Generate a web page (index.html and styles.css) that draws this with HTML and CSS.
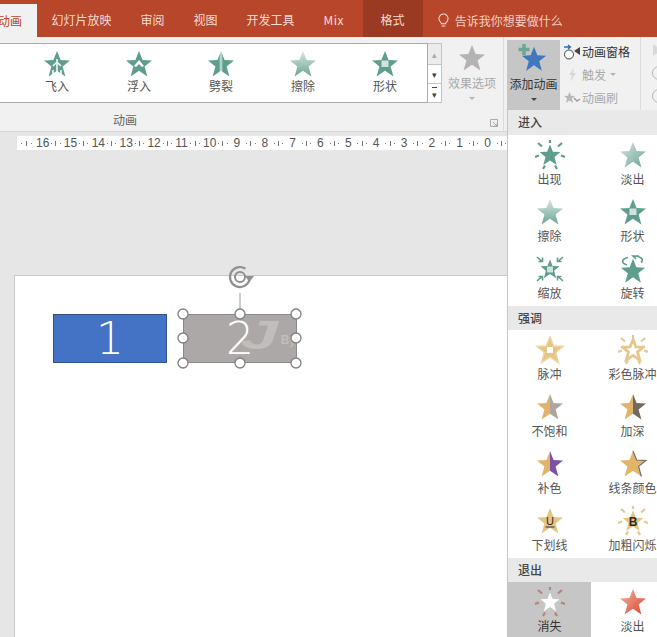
FILE: index.html
```html
<!DOCTYPE html>
<html lang="zh">
<head>
<meta charset="utf-8">
<title>动画</title>
<link rel="stylesheet" href="styles.css">
</head>
<body>
<svg class="defs" aria-hidden="true">
  <defs>
    <symbol id="s" viewBox="0 0 30 30"><polygon points="15,2 18.6,11 28,11.4 20.6,17.4 23.4,27.5 15,21.8 6.6,27.5 9.4,17.4 2,11.4 11.4,11"/></symbol>
    <symbol id="rays" viewBox="0 0 30 30"><path d="M15 0v3M3 3l4 3.500M27 3l-4 3.500M0 17l4-1.500M30 17l-4-1.500M8 29l2-3.500M22 29l-2-3.500" fill="none" stroke="currentColor" stroke-width="2.200"/></symbol>
    <linearGradient id="gFade" x1="0" y1="0" x2="1" y2="1"><stop offset="0" stop-color="#d5e5e0"/><stop offset="1" stop-color="#6fa596"/></linearGradient>
    <linearGradient id="gWipe" x1="0" y1="0" x2="0" y2="1"><stop offset="0" stop-color="#d8e7e3"/><stop offset="1" stop-color="#6ea596"/></linearGradient>
    <linearGradient id="gSplit" x1="0" y1="0" x2="1" y2="0"><stop offset="0" stop-color="#5f9e8e"/><stop offset=".42" stop-color="#5f9e8e"/><stop offset=".5" stop-color="#cfe2dc"/><stop offset=".58" stop-color="#5f9e8e"/><stop offset="1" stop-color="#5f9e8e"/></linearGradient>
    <linearGradient id="gRed" x1="0" y1="0" x2="1" y2="1"><stop offset="0" stop-color="#f3b6a6"/><stop offset="1" stop-color="#d8432a"/></linearGradient>
    <linearGradient id="gDesat" x1="0" y1="0" x2="1" y2="0"><stop offset=".5" stop-color="#e0b46a"/><stop offset=".5" stop-color="#aea69c"/></linearGradient>
    <linearGradient id="gDark" x1="0" y1="0" x2="1" y2="0"><stop offset=".5" stop-color="#e0b46a"/><stop offset=".5" stop-color="#75695c"/></linearGradient>
    <linearGradient id="gPurple" x1="0" y1="0" x2="1" y2="0"><stop offset=".5" stop-color="#e0b46a"/><stop offset=".5" stop-color="#7c52a6"/></linearGradient>
  </defs>
</svg>

<div class="window">
  <nav class="tabs">
    <span class="tab tab-active">动画</span>
    <span class="tab">幻灯片放映</span>
    <span class="tab">审阅</span>
    <span class="tab">视图</span>
    <span class="tab">开发工具</span>
    <span class="tab tab-mix">Mix</span>
    <span class="tab tab-format">格式</span>
    <span class="tell">
      <svg class="bulb" viewBox="0 0 12 16"><path d="M3.500 10.500C2 9.300 1 8 1 6a5 5 0 0 1 10 0c0 2-1 3.300-2.500 4.500v1h-5zM4 14h4" fill="none" stroke="currentColor" stroke-width="1.100"/></svg>
      告诉我你想要做什么
    </span>
  </nav>

  <section class="ribbon">
    <div class="anim-group">
      <div class="anim-top">
        <div class="gallery">
          <div class="gal-item">
            <svg class="ico" viewBox="0 0 30 30"><use href="#s" class="green"/><path d="M15 10v14M11 17l4-4 4 4M11 21v4M19 21v4" fill="none" stroke="#fff" stroke-width="1.500"/></svg>
            <span class="gal-label">飞入</span>
          </div>
          <div class="gal-item">
            <svg class="ico" viewBox="0 0 30 30"><use href="#s" class="green"/><path d="M15 11l-5 6 2 1 3-3 3 3 2-1z" fill="#fff"/></svg>
            <span class="gal-label">浮入</span>
          </div>
          <div class="gal-item">
            <svg class="ico" viewBox="0 0 30 30"><use href="#s" fill="url(#gSplit)"/></svg>
            <span class="gal-label">劈裂</span>
          </div>
          <div class="gal-item">
            <svg class="ico" viewBox="0 0 30 30"><use href="#s" fill="url(#gWipe)"/></svg>
            <span class="gal-label">擦除</span>
          </div>
          <div class="gal-item">
            <svg class="ico" viewBox="0 0 30 30"><use href="#s" class="green"/><rect x="11.500" y="11.500" width="7" height="6.500" fill="#cfe2dc"/></svg>
            <span class="gal-label">形状</span>
          </div>
        </div>
        <div class="gal-scroll">
          <span class="sb sb-up">▴</span>
          <span class="sb">▾</span>
          <span class="sb sb-more">▾</span>
        </div>
        <div class="effect">
          <svg class="ico" viewBox="0 0 30 30"><use href="#s" class="gray"/></svg>
          <span class="effect-label">效果选项</span>
          <span class="caret caret-dim"></span>
        </div>
      </div>
      <div class="group-label">
        <span class="group-name">动画</span>
        <svg class="launcher" viewBox="0 0 8 8"><path d="M.5.5h7v7h-7zM3 3l4 4M4.500 7H7V4.500" fill="none" stroke="#999" stroke-width=".8"/></svg>
      </div>
    </div>

    <div class="add-btn">
      <svg class="add-ico" viewBox="0 0 40 31">
        <use href="#s" x="6" y="2" width="28" height="28" fill="#3f78bd"/>
        <path d="M10 1v11M4.500 6.500h11" stroke="#6aa892" stroke-width="3.500"/>
      </svg>
      <span class="add-label">添加动画</span>
      <span class="caret"></span>
    </div>

    <div class="adv-group">
      <div class="adv-row">
        <svg class="adv-ico" viewBox="0 0 18 16"><circle cx="6" cy="10.500" r="4.500" fill="#fff" stroke="#444"/><path d="M1 3h6M5 1l2.500 2L5 5" fill="none" stroke="#2e6fb5" stroke-width="1.300"/><path d="M17 3v8l-6-4z" fill="#444"/></svg>
        <span>动画窗格</span>
      </div>
      <div class="adv-row adv-dim">
        <svg class="adv-ico" viewBox="0 0 18 16"><path d="M11 1L6 8h3l-2 7 6-9h-3z" fill="#d8d8d8"/></svg>
        <span>触发</span><span class="caret caret-dim caret-inline"></span>
      </div>
      <div class="adv-row adv-dim">
        <svg class="adv-ico" viewBox="0 0 18 16"><use href="#s" x="0" y="1" width="13" height="13" fill="#b9b9b9"/><path d="M11 8l3 3 3-2" fill="none" stroke="#999" stroke-width="1.400"/></svg>
        <span>动画刷</span>
      </div>
    </div>

    <div class="timing">
      <svg class="timing-ico" viewBox="0 0 12 14"><path d="M1 1l9 6-9 6z" fill="#d9d9d9"/></svg>
      <svg class="timing-ico" viewBox="0 0 14 14"><circle cx="8" cy="7" r="6.500" fill="none" stroke="#b5b5b5"/></svg>
      <svg class="timing-ico" viewBox="0 0 14 14"><circle cx="8" cy="7" r="6.500" fill="none" stroke="#b5b5b5"/></svg>
    </div>
  </section>

  <main class="workspace">
    <div class="ruler">
      <span class="r-lead"><i class="dot"></i><i class="tick"></i><i class="dot"></i></span>
      <span class="r-cell"><b>16</b><span class="r-marks"><i class="dot"></i><i class="tick"></i><i class="dot"></i></span></span>
      <span class="r-cell"><b>15</b><span class="r-marks"><i class="dot"></i><i class="tick"></i><i class="dot"></i></span></span>
      <span class="r-cell"><b>14</b><span class="r-marks"><i class="dot"></i><i class="tick"></i><i class="dot"></i></span></span>
      <span class="r-cell"><b>13</b><span class="r-marks"><i class="dot"></i><i class="tick"></i><i class="dot"></i></span></span>
      <span class="r-cell"><b>12</b><span class="r-marks"><i class="dot"></i><i class="tick"></i><i class="dot"></i></span></span>
      <span class="r-cell"><b>11</b><span class="r-marks"><i class="dot"></i><i class="tick"></i><i class="dot"></i></span></span>
      <span class="r-cell"><b>10</b><span class="r-marks"><i class="dot"></i><i class="tick"></i><i class="dot"></i></span></span>
      <span class="r-cell"><b>9</b><span class="r-marks"><i class="dot"></i><i class="tick"></i><i class="dot"></i></span></span>
      <span class="r-cell"><b>8</b><span class="r-marks"><i class="dot"></i><i class="tick"></i><i class="dot"></i></span></span>
      <span class="r-cell"><b>7</b><span class="r-marks"><i class="dot"></i><i class="tick"></i><i class="dot"></i></span></span>
      <span class="r-cell"><b>6</b><span class="r-marks"><i class="dot"></i><i class="tick"></i><i class="dot"></i></span></span>
      <span class="r-cell"><b>5</b><span class="r-marks"><i class="dot"></i><i class="tick"></i><i class="dot"></i></span></span>
      <span class="r-cell"><b>4</b><span class="r-marks"><i class="dot"></i><i class="tick"></i><i class="dot"></i></span></span>
      <span class="r-cell"><b>3</b><span class="r-marks"><i class="dot"></i><i class="tick"></i><i class="dot"></i></span></span>
      <span class="r-cell"><b>2</b><span class="r-marks"><i class="dot"></i><i class="tick"></i><i class="dot"></i></span></span>
      <span class="r-cell"><b>1</b><span class="r-marks"><i class="dot"></i><i class="tick"></i><i class="dot"></i></span></span>
      <span class="r-cell"><b>0</b><span class="r-marks"><i class="dot"></i><i class="tick"></i><i class="dot"></i></span></span>
    </div>

    <div class="slide">
      <div class="shape shape-one">1</div>
      <div class="shape shape-two">
        <span class="wm-j">J</span>
        <span class="wm-by">By</span>
        <span class="shape-num">2</span>
      </div>
      <svg class="handles" viewBox="0 0 134 108">
        <path d="M67 28v21" stroke="#9a9a9a" fill="none"/>
        <path d="M72.500 3.700A10 10 0 1 0 76.500 15" fill="none" stroke="#8f8f8f" stroke-width="2.200"/>
        <circle cx="67" cy="12" r="5" fill="none" stroke="#8f8f8f" stroke-width="2"/>
        <path d="M72 11h9l-4.500 6z" fill="#8f8f8f"/>
        <g class="hdl">
          <circle cx="10" cy="49" r="5"/><circle cx="67" cy="49" r="5"/><circle cx="123" cy="49" r="5"/>
          <circle cx="10" cy="73" r="5"/><circle cx="123" cy="73" r="5"/>
          <circle cx="10" cy="98" r="5"/><circle cx="67" cy="98" r="5"/><circle cx="123" cy="98" r="5"/>
        </g>
      </svg>
    </div>
  </main>

  <aside class="panel">
    <h3 class="panel-head">进入</h3>
    <div class="panel-grid">
      <div class="p-item"><svg class="ico" viewBox="0 0 30 30"><use href="#rays" class="ray-green"/><use href="#s" x="3" y="3" width="24" height="24" class="green"/></svg><span>出现</span></div>
      <div class="p-item"><svg class="ico" viewBox="0 0 30 30"><use href="#s" fill="url(#gFade)"/></svg><span>淡出</span></div>
      <div class="p-item"><svg class="ico" viewBox="0 0 30 30"><use href="#s" fill="url(#gWipe)"/></svg><span>擦除</span></div>
      <div class="p-item"><svg class="ico" viewBox="0 0 30 30"><use href="#s" class="green"/><rect x="11.500" y="11.500" width="7" height="6.500" fill="#cfe2dc"/></svg><span>形状</span></div>
      <div class="p-item"><svg class="ico" viewBox="0 0 30 30"><use href="#s" x="4" y="4" width="22" height="22" class="green"/><rect x="12" y="12.500" width="6" height="6" fill="#cfe2dc"/><path d="M2 3l5 4.500M7.500 3.500v4h-4M28 3l-5 4.500M22.500 3.500v4h4M2 27l5-4.500M7.500 26.500v-4h-4M28 27l-5-4.500M22.500 26.500v-4h4" fill="none" stroke="#5f9e8e" stroke-width="1.600"/></svg><span>缩放</span></div>
      <div class="p-item"><svg class="ico" viewBox="0 0 30 30"><use href="#s" x="1" y="3" width="28" height="28" class="green"/><path d="M9 11C3 9 3 5 10 3.500M15 2c9 0 11 4 8 6.500M21 2l-6 0 3 3" fill="none" stroke="#5f9e8e" stroke-width="1.700"/></svg><span>旋转</span></div>
    </div>
    <h3 class="panel-head">强调</h3>
    <div class="panel-grid">
      <div class="p-item"><svg class="ico" viewBox="0 0 30 30"><use href="#s" class="tan-soft" stroke="#eed3a0" stroke-width="1.500"/><rect x="12" y="12" width="6" height="6" fill="#fff"/></svg><span>脉冲</span></div>
      <div class="p-item"><svg class="ico" viewBox="0 0 30 30"><use href="#rays" class="ray-tan"/><use href="#s" x="3" y="3" width="24" height="24" fill="#fff" stroke="#e5c68c" stroke-width="3.500"/></svg><span>彩色脉冲</span></div>
      <div class="p-item"><svg class="ico" viewBox="0 0 30 30"><use href="#s" fill="url(#gDesat)"/></svg><span>不饱和</span></div>
      <div class="p-item"><svg class="ico" viewBox="0 0 30 30"><use href="#s" fill="url(#gDark)"/></svg><span>加深</span></div>
      <div class="p-item"><svg class="ico" viewBox="0 0 30 30"><use href="#s" fill="url(#gPurple)"/></svg><span>补色</span></div>
      <div class="p-item"><svg class="ico" viewBox="0 0 30 30"><use href="#s" fill="#e4b566"/><path d="M15 2l3.600 9 9.400.4-7.400 6 2.800 10.100" fill="none" stroke="#6b6b6b" stroke-width="1.100"/></svg><span>线条颜色</span></div>
      <div class="p-item"><svg class="ico" viewBox="0 0 30 30"><use href="#s" class="tan-soft"/><text x="15" y="19" class="ico-letter">U</text><path d="M10.500 21h9" stroke="#333" stroke-width="1"/></svg><span>下划线</span></div>
      <div class="p-item"><svg class="ico" viewBox="0 0 30 30"><use href="#rays" class="ray-tan"/><use href="#s" x="3" y="3" width="24" height="24" class="tan-soft"/><text x="15" y="20" class="ico-letter ico-bold">B</text></svg><span>加粗闪烁</span></div>
    </div>
    <h3 class="panel-head">退出</h3>
    <div class="panel-grid">
      <div class="p-item p-selected"><svg class="ico" viewBox="0 0 30 30"><use href="#rays" class="ray-red"/><use href="#s" x="4" y="4" width="22" height="22" fill="#fff"/></svg><span>消失</span></div>
      <div class="p-item"><svg class="ico" viewBox="0 0 30 30"><use href="#s" fill="url(#gRed)"/></svg><span>淡出</span></div>
    </div>
  </aside>
</div>
</body>
</html>
```

FILE: styles.css
```css
* { box-sizing: border-box; }
html, body { margin: 0; padding: 0; height: 100%; overflow: hidden; }
body {
  font-family: "Noto Sans CJK SC", "Liberation Sans", sans-serif;
  font-size: 12px;
  color: #444;
  background: #e6e6e6;
}
.defs { position: absolute; width: 0; height: 0; }
.window { position: relative; width: 657px; height: 637px; overflow: hidden; display: flex; flex-direction: column; }

/* tabs */
.tabs { flex: none; height: 37px; background: #b8462a; display: flex; align-items: stretch; color: #f6dcd3; white-space: nowrap; }
.tab { display: flex; align-items: center; padding: 3px 14.5px 0; line-height: 1; }
.tab-active { margin-left: -2px; padding: 0 15px 0 0; margin-top: 4px; background: #f1f1f1; color: #b8462a; }
.tab-mix { padding-right: 16px; letter-spacing: .5px; }
.tab-format { margin-left: 2.500px; padding: 3px 18px 0; background: #9b3a22; }
.tell { display: flex; align-items: center; padding: 3px 0 0 15px; gap: 6px; color: #f3cfc3; }
.bulb { width: 11px; height: 15px; color: #f6e3dc; }

/* ribbon */
.ribbon { flex: none; height: 95px; background: #f1f1f1; border-bottom: 1px solid #d6d6d6; display: flex; align-items: stretch; }
.anim-group { width: 504px; flex: none; display: flex; flex-direction: column; border-right: 1px solid #dcdcdc; }
.anim-top { display: flex; height: 66px; padding-top: 6px; }
.gallery { width: 428px; height: 60px; background: #fff; border: 1px solid #ababab; border-left: 0; display: grid; grid-template-columns: repeat(5, 82px); padding-left: 16px; }
.gal-item { display: flex; flex-direction: column; align-items: center; padding-top: 5px; }
.gal-label { line-height: 14px; margin-top: 0; color: #555; }
.ico { width: 30px; height: 30px; display: block; flex: none; }
.green { fill: #5f9e8e; }
.gray { fill: #b3b3b3; }
.tan-soft { fill: #e6c484; }
.ray-green { color: #5f9e8e; }
.ray-tan { color: #e3c992; }
.ray-red { color: #b9827e; }
.ico-letter { font-family: "Liberation Sans", sans-serif; font-size: 11px; text-anchor: middle; fill: #2b2b2b; }
.ico-bold { font-weight: 700; font-size: 12px; }
.gal-scroll { width: 14px; height: 60px; display: grid; grid-template-rows: 21px 19px 20px; border: 1px solid #c4c4c4; border-left: 0; background: #fff; }
.sb { display: flex; align-items: center; justify-content: center; font-size: 9px; line-height: 1; color: #444; border-bottom: 1px solid #c4c4c4; }
.sb-up { background: #ececec; color: #aaa; }
.sb-more { border-bottom: 0; text-decoration: overline; }
.effect { width: 60px; flex: none; display: flex; flex-direction: column; align-items: center; }
.effect-label { margin-top: 2px; line-height: 16px; color: #a9a9a9; }
.caret { width: 0; height: 0; border: 3px solid transparent; border-top: 3px solid #444; border-bottom: 0; margin-top: 6px; }
.caret-dim { border-top-color: #b5b5b5; }
.caret-inline { margin: 0 0 0 4px; }
.group-label { flex: 1; display: flex; align-items: center; padding-top: 6px; }
.group-name { margin-left: 113px; color: #666; line-height: 14px; }
.launcher { width: 8px; height: 8px; margin: 6px 5px 0 auto; }

/* add animation */
.add-btn { width: 53px; flex: none; margin: 3px 0 0 3px; height: 70px; background: #c6c6c6; display: flex; flex-direction: column; align-items: center; padding-top: 3px; }
.add-ico { width: 40px; height: 31px; display: block; flex: none; }
.add-label { margin-top: 2px; white-space: nowrap; line-height: 16px; color: #333; }

/* advanced */
.adv-group { width: 81px; flex: none; display: flex; flex-direction: column; padding: 3px 0 0 3px; border-right: 1px solid #dcdcdc; height: 74px; }
.adv-row { display: flex; align-items: center; height: 23px; color: #333; white-space: nowrap; }
.adv-dim { color: #a9a9a9; }
.adv-ico { width: 18px; height: 16px; margin-right: 1px; flex: none; }
.timing { display: flex; flex-direction: column; gap: 9px; padding: 6px 0 0 10px; }
.timing-ico { width: 14px; height: 14px; display: block; flex: none; }

/* workspace */
.workspace { flex: 1; position: relative; background: #e6e6e6; min-height: 0; padding-top: 4px; }
.ruler { margin-left: 17px; width: 490px; height: 14px; background: #fff; display: flex; align-items: center; color: #555; overflow: hidden; }
.r-lead { width: 19px; flex: none; display: flex; justify-content: space-evenly; align-items: center; }
.r-cell { width: 27.850px; flex: none; display: flex; align-items: center; }
.r-cell b { width: 12px; flex: none; font: 400 12px/14px "Liberation Sans", sans-serif; text-align: center; }
.r-marks { flex: 1; display: flex; justify-content: space-evenly; align-items: center; }
.dot { width: 1px; height: 1px; background: #777; display: block; }
.tick { width: 1px; height: 5px; background: #777; display: block; }
.slide { position: absolute; left: 14px; top: 143px; width: 500px; height: 400px; background: #fff; border: 1px solid #c9c9c9; }
.shape { position: absolute; top: 38px; width: 114px; height: 49px; display: flex; align-items: center; justify-content: center; color: #fff; font: 200 44px/1 "DejaVu Sans", sans-serif; }
.shape-one { left: 38px; background: #4472c4; border: 1px solid #2f528f; }
.shape-two { left: 168px; background: #aca8a7; border: 1px solid #8b8b8b; }
.shape-num { position: relative; }
.wm-j { position: absolute; left: 64px; top: 0; font: 700 italic 40px/40px "Liberation Sans", sans-serif; color: #c0bdbc; transform: scaleX(1.700); }
.wm-by { position: absolute; right: 0; top: 18px; font: 700 12px/14px "Liberation Sans", sans-serif; color: #c0bdbc; }
.handles { position: absolute; left: 158px; top: -11px; width: 134px; height: 108px; overflow: visible; }
.hdl circle { fill: #fff; stroke: #7f7f7f; stroke-width: 1.300; }

/* panel */
.panel { position: absolute; left: 507px; top: 110px; width: 150px; height: 527px; background: #fff; border-left: 1px solid #c6c6c6; overflow: hidden; display: flex; flex-direction: column; }
.panel-head { margin: 0; height: 24px; flex: none; background: #e9e9e9; font-weight: 500; font-size: 12px; line-height: 24px; padding-left: 10px; color: #444; }
.panel-head:first-child { height: 25px; }
.panel-grid { flex: none; display: grid; grid-template-columns: repeat(2, 83px); grid-auto-rows: 57px; }
.p-item { display: flex; flex-direction: column; align-items: center; padding-top: 5px; line-height: 14px; color: #555; white-space: nowrap; }
.p-item span { margin-top: 2px; }
.p-selected { background: #c6c6c6; color: #333; }
```
